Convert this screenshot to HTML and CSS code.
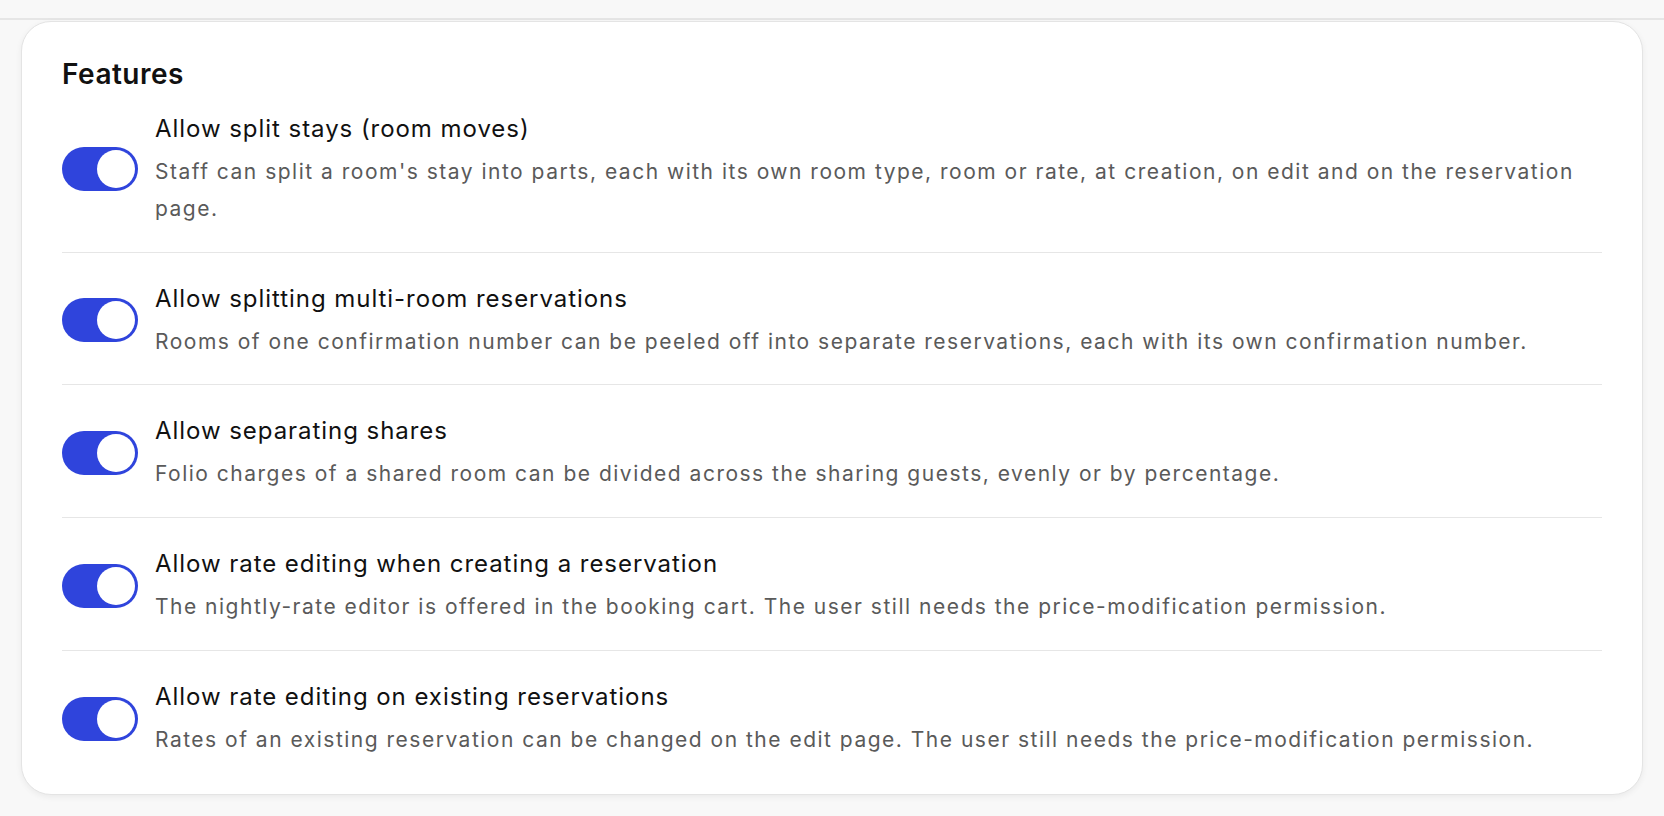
FILE: index.html
```html
<!DOCTYPE html>
<html lang="en">
<head>
    <meta charset="UTF-8">
    <meta name="viewport" content="width=device-width, initial-scale=1.0">
    <title>Reservation settings - Features</title>
    <link rel="stylesheet" href="styles.css">
</head>
<body>
    <div class="topbar"></div>

    <main class="page">
        <section class="card">
            <h2>Features</h2>

            <div class="feature">
                <label class="switch"><input type="checkbox" checked><span class="slider"></span></label>
                <div class="feature-text">
                    <div class="feature-title">Allow split stays (room moves)</div>
                    <div class="feature-desc">Staff can split a room's stay into parts, each with its own room type, room or rate, at creation, on edit and on the reservation page.</div>
                </div>
            </div>

            <div class="feature">
                <label class="switch"><input type="checkbox" checked><span class="slider"></span></label>
                <div class="feature-text">
                    <div class="feature-title">Allow splitting multi-room reservations</div>
                    <div class="feature-desc">Rooms of one confirmation number can be peeled off into separate reservations, each with its own confirmation number.</div>
                </div>
            </div>

            <div class="feature">
                <label class="switch"><input type="checkbox" checked><span class="slider"></span></label>
                <div class="feature-text">
                    <div class="feature-title">Allow separating shares</div>
                    <div class="feature-desc">Folio charges of a shared room can be divided across the sharing guests, evenly or by percentage.</div>
                </div>
            </div>

            <div class="feature">
                <label class="switch"><input type="checkbox" checked><span class="slider"></span></label>
                <div class="feature-text">
                    <div class="feature-title">Allow rate editing when creating a reservation</div>
                    <div class="feature-desc">The nightly-rate editor is offered in the booking cart. The user still needs the price-modification permission.</div>
                </div>
            </div>

            <div class="feature">
                <label class="switch"><input type="checkbox" checked><span class="slider"></span></label>
                <div class="feature-text">
                    <div class="feature-title">Allow rate editing on existing reservations</div>
                    <div class="feature-desc">Rates of an existing reservation can be changed on the edit page. The user still needs the price-modification permission.</div>
                </div>
            </div>
        </section>
    </main>
</body>
</html>
```

FILE: styles.css
```css
* {
    margin: 0;
    padding: 0;
    box-sizing: border-box;
}

body {
    font-family: Inter, 'Noto Sans', sans-serif;
    background: #f8f8f8;
    color: #111;
}

.topbar {
    height: 20px;
    border-bottom: 2px solid #e6e6e6;
}

.page {
    padding: 1px 21px 21px;
}

.card {
    background: #fff;
    border: 1px solid #e4e4e4;
    border-radius: 30px;
    padding: 35px 40px 35px;
    box-shadow: 0 2px 6px rgba(0, 0, 0, 0.06);
}

h2 {
    font-size: 28px;
    line-height: 34px;
    font-weight: 600;
    letter-spacing: 0.5px;
    margin-bottom: 20px;
}

.feature {
    display: flex;
    align-items: center;
    gap: 17px;
    padding: 28px 0 24px;
    border-bottom: 1.5px solid #e6e6e6;
}

.feature:first-of-type {
    padding-top: 0;
}

.feature:last-child {
    padding-bottom: 0;
    border-bottom: none;
}

.feature-text {
    flex: 1;
}

.feature-title {
    font-size: 24px;
    line-height: 36px;
    letter-spacing: 0.95px;
    color: #111;
}

.feature-desc {
    margin-top: 7px;
    font-size: 21px;
    line-height: 1.75;
    letter-spacing: 1.5px;
    color: #5a5a5a;
}

/* toggle */
.switch {
    position: relative;
    flex: none;
    width: 76px;
    height: 44px;
}

.switch input {
    display: none;
}

.slider {
    position: absolute;
    inset: 0;
    border-radius: 22px;
    background: #c9c9c9;
    cursor: pointer;
}

.slider::before {
    content: "";
    position: absolute;
    top: 3px;
    left: 3px;
    width: 38px;
    height: 38px;
    border-radius: 50%;
    background: #fff;
}

.switch input:checked + .slider {
    background: #2f44dc;
}

.switch input:checked + .slider::before {
    left: 35px;
}
```
